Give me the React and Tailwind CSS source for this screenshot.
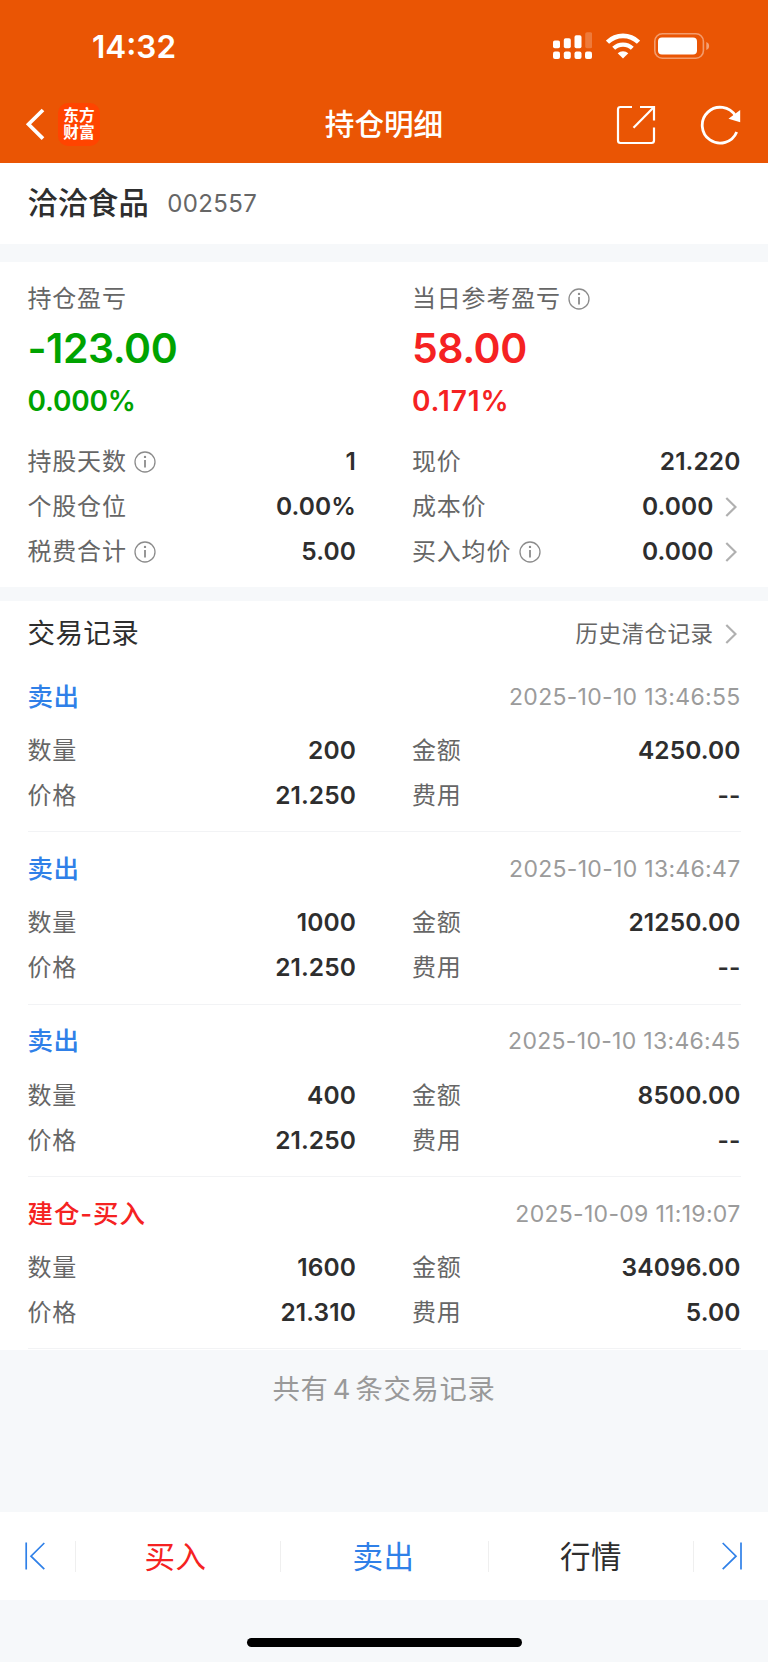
import React from "react";

const summary = [
    { label: "持仓盈亏", info: false, value: "-123.00", rate: "0.000%", color: "text-[#00a300]", spacing: "tracking-[-0.2px]" },
    { label: "当日参考盈亏", info: true, value: "58.00", rate: "0.171%", color: "text-[#f52222]", spacing: "tracking-[0.9px]" },
];

const details = [
    { label: "持股天数", info: true, value: "1" },
    { label: "现价", value: "21.220" },
    { label: "个股仓位", value: "0.00%" },
    { label: "成本价", value: "0.000", link: true },
    { label: "税费合计", info: true, value: "5.00" },
    { label: "买入均价", info: true, value: "0.000", link: true },
];

const records = [
    { type: "卖出", time: "2025-10-10 13:46:55", count: "200", amount: "4250.00", price: "21.250", fee: "--" },
    { type: "卖出", time: "2025-10-10 13:46:47", count: "1000", amount: "21250.00", price: "21.250", fee: "--" },
    { type: "卖出", time: "2025-10-10 13:46:45", count: "400", amount: "8500.00", price: "21.250", fee: "--" },
    { type: "建仓-买入", buy: true, time: "2025-10-09 11:19:07", count: "1600", amount: "34096.00", price: "21.310", fee: "5.00" },
];

function InfoIcon() {
    return (
        <svg className="ml-[7.5px] h-[22px] w-[22px] shrink-0" viewBox="0 0 22 22" fill="none" stroke="#8c8c8c" strokeWidth="1.3">
            <circle cx="11" cy="11" r="10" />
            <path d="M11 9v7.5" strokeWidth="1.8" />
            <circle cx="11" cy="5.9" r="1.2" fill="#8c8c8c" stroke="none" />
        </svg>
    );
}

function ChevronRight() {
    return (
        <svg className="mr-1 ml-[11px] h-5 w-3 shrink-0" viewBox="0 0 12 20" fill="none" stroke="#b0b0b0" strokeWidth="2.2">
            <path d="M1.3 1l9.2 9-9.2 9" />
        </svg>
    );
}

function StatusBar() {
    return (
        <div className="flex h-[92px] items-center justify-between pr-[58px] pl-[92px]">
            <span className="pt-[2px] text-[31.5px] leading-10 font-semibold">14:32</span>
            <div className="flex items-center">
                <svg className="h-[28px] w-[39px]" viewBox="0 0 39 28" fill="#fff">
                    <rect x="0" y="8.4" width="7" height="7.8" rx="1.8" />
                    <rect x="10.8" y="6.2" width="7" height="10" rx="1.8" />
                    <rect x="21.5" y="3.2" width="7" height="13" rx="1.8" />
                    <rect x="32.2" y="0.2" width="7" height="16" rx="1.8" opacity="0.22" />
                    <rect x="0" y="19.5" width="7" height="7.6" rx="2" />
                    <rect x="10.8" y="19.5" width="7" height="7.6" rx="2" />
                    <rect x="21.5" y="19.5" width="7" height="7.6" rx="2" />
                    <rect x="32" y="19.5" width="7" height="7.6" rx="2" />
                </svg>
                <svg className="ml-[14px] h-[26px] w-[34px]" viewBox="0 0 34 26" fill="none" stroke="#fff" strokeWidth="4.6">
                    <path d="M1.5 9.2a22.2 22.2 0 0 1 31 0" />
                    <path d="M7.7 15.3a13.4 13.4 0 0 1 18.6 0" strokeWidth="4.2" />
                    <path d="M17 25.6l-5.3-5.3a7.6 7.6 0 0 1 10.6 0z" fill="#fff" stroke="none" />
                </svg>
                <svg className="ml-[14px] h-[26px] w-[56px]" viewBox="0 0 56 26" fill="none">
                    <rect x="0.8" y="0.8" width="48.6" height="24.4" rx="7.5" stroke="#fff" strokeOpacity="0.42" strokeWidth="1.6" />
                    <rect x="4" y="4.5" width="39" height="17" rx="4" fill="#fff" />
                    <path d="M52.3 9c3.8 1.2 3.8 6.8 0 8z" fill="#fff" fillOpacity="0.45" />
                </svg>
            </div>
        </div>
    );
}

function NavBar() {
    return (
        <div className="grid h-[71px] grid-cols-3 items-start pt-[10px]">
            <div className="flex items-center pl-[25px]">
                <svg className="h-[44px] w-[20px]" viewBox="0 0 20 44" fill="none" stroke="#fff" strokeWidth="3.7">
                    <path d="M18 8L3.5 22.3 18 36.6" />
                </svg>
                <div className="ml-[13px] flex h-[43px] w-[42px] flex-col items-center justify-center rounded-[10px] bg-[#ff4400] text-[15.7px] leading-[17.5px] font-bold">
                    <span>东方</span>
                    <span>财富</span>
                </div>
            </div>
            <h1 className="text-center text-[29.6px] leading-[44px] font-medium">持仓明细</h1>
            <div className="flex h-[46px] items-center justify-end pr-[27px]">
                <svg className="h-[40px] w-[40px]" viewBox="0 0 40 40" fill="none" stroke="#fff" strokeWidth="2.2">
                    <path d="M16 2H4.5Q2 2 2 4.5v31Q2 38 4.5 38h31q2.5 0 2.5-2.5V22.5" />
                    <path d="M24 2h14v13.5" />
                    <path d="M17.5 22.8L38 2" />
                </svg>
                <svg className="ml-[43px] h-[42px] w-[42px]" viewBox="0 0 42 42" fill="none" stroke="#fff" strokeWidth="2.8">
                    <path d="M37.7 28A17.9 17.9 0 1 1 36.5 12" />
                    <path d="M41.2 6v12.2l-11.7-3.4z" fill="#fff" stroke="none" />
                </svg>
            </div>
        </div>
    );
}

function Row({ label, value, info, link }) {
    return (
        <div className="flex h-[45px] items-center">
            <span className="text-[24px] leading-[45px] tracking-[0.8px] text-[#666]">{label}</span>
            {info && <InfoIcon />}
            <span className="ml-auto text-[24.5px] leading-[45px] font-semibold tracking-[0.1px] text-[#2e2e2e]">{value}</span>
            {link && <ChevronRight />}
        </div>
    );
}

function Record({ record }) {
    return (
        <div className="mx-[27.5px] h-[172.3px] border-b border-[#f2f3f5] pt-[14px]">
            <div className="flex h-[46px] items-center justify-between">
                <span
                    className={
                        record.buy
                            ? "text-[25.5px] font-medium tracking-[0.9px] text-[#f52222]"
                            : "text-[25.5px] font-medium tracking-[0.5px] text-[#2f80e8]"
                    }
                >
                    {record.type}
                </span>
                <span className="text-[23px] tracking-[0.3px] text-[#9b9b9b]">{record.time}</span>
            </div>
            <div className="mt-[8px] grid grid-cols-2 gap-x-14">
                <Row label="数量" value={record.count} />
                <Row label="金额" value={record.amount} />
                <Row label="价格" value={record.price} />
                <Row label="费用" value={record.fee} />
            </div>
        </div>
    );
}

function BottomBar() {
    return (
        <nav className="flex h-[88px] items-center bg-white text-[30.5px] tracking-[0.5px]">
            <button className="flex w-[75px] pl-6">
                <svg className="h-7 w-[22px]" viewBox="0 0 22 28" fill="none" stroke="#2f80e8" strokeWidth="1.7">
                    <path d="M2.2 0.5v27M20.3 1L7 14.2l13.3 13" />
                </svg>
            </button>
            <button className="h-[31px] w-[205px] border-l border-[#efefef] pr-[5px] text-center leading-[31px] text-[#f52222]">买入</button>
            <button className="h-[31px] w-[208px] border-l border-[#efefef] pr-[2px] text-center leading-[31px] text-[#2f80e8]">卖出</button>
            <button className="h-[31px] w-[205px] border-l border-[#efefef] text-center leading-[31px] text-[#2e2e2e]">行情</button>
            <button className="flex h-[31px] w-[75px] items-center border-l border-[#efefef] pl-[27px]">
                <svg className="h-7 w-[22px]" viewBox="0 0 22 28" fill="none" stroke="#2f80e8" strokeWidth="1.7">
                    <path d="M20 0.5v27M1.7 1L15 14.2l-13.3 13" />
                </svg>
            </button>
        </nav>
    );
}

export default function App() {
    return (
        <div className="flex h-[1662px] w-[768px] flex-col overflow-hidden bg-[#f6f8fa] font-['Inter','Noto_Sans_CJK_SC',sans-serif]">
            <header className="h-[163px] shrink-0 bg-[#ea5504] text-white">
                <StatusBar />
                <NavBar />
            </header>

            <section className="flex h-[81px] shrink-0 items-center bg-white px-[27.5px]">
                <span className="text-[30.3px] font-medium text-[#2e2e2e]">洽洽食品</span>
                <span className="ml-[18.5px] text-[24px] tracking-[0.4px] text-[#666]">002557</span>
            </section>

            <section className="mt-[18px] h-[325px] shrink-0 bg-white px-[27.5px] pt-[14px]">
                <div className="grid grid-cols-2 gap-x-14">
                    {summary.map((item) => (
                        <div key={item.label} className={item.color}>
                            <div className="flex h-[45px] items-center text-[24px] tracking-[0.8px] text-[#666]">
                                {item.label}
                                {item.info && <InfoIcon />}
                            </div>
                            <div className="h-[54px] text-[41px] leading-[54px] font-semibold tracking-[-0.5px]">{item.value}</div>
                            <div className={`h-[51px] text-[28px] leading-[53px] font-semibold ${item.spacing}`}>{item.rate}</div>
                        </div>
                    ))}
                </div>
                <div className="mt-[13px] grid grid-cols-2 gap-x-14">
                    {details.map((item) => (
                        <Row key={item.label} {...item} />
                    ))}
                </div>
            </section>

            <section className="mt-[14px] h-[749px] shrink-0 bg-white">
                <div className="flex h-[59px] items-center justify-between px-[27.5px] pt-[7px]">
                    <h2 className="text-[27.5px] tracking-[0.4px] text-[#2e2e2e]">交易记录</h2>
                    <div className="flex items-center text-[22.5px] tracking-[0.5px] text-[#666]">
                        历史清仓记录
                        <ChevronRight />
                    </div>
                </div>
                {records.map((record) => (
                    <Record key={record.time} record={record} />
                ))}
            </section>

            <p className="mt-[18px] h-[44px] shrink-0 text-center text-[27.3px] leading-[44px] tracking-[0.7px] [word-spacing:-4px] text-[#999]">
                共有 4 条交易记录
            </p>

            <div className="mt-auto shrink-0">
                <BottomBar />
                <div className="flex h-[62px] justify-center pt-[37.5px]">
                    <div className="h-[9.5px] w-[275px] rounded-full bg-black" />
                </div>
            </div>
        </div>
    );
}
